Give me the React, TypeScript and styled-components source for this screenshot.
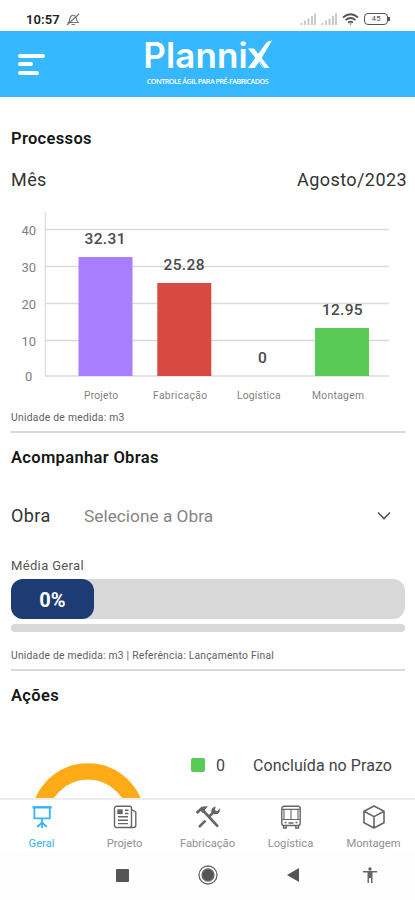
import React from "react";
import styled, { createGlobalStyle } from "styled-components";

const Global = createGlobalStyle`
  * { box-sizing: border-box; }
  html, body { margin: 0; padding: 0; background: #fff; }
  body { font-family: Roboto, "Liberation Sans", sans-serif; overflow: hidden; }
`;

const Screen = styled.div`
  width: 415px;
  height: 900px;
  display: flex;
  flex-direction: column;
  background: #fff;
  overflow: hidden;
`;

const StatusBar = styled.div`
  height: 31px;
  flex: none;
  display: flex;
  align-items: center;
  padding: 7px 27px 0 26px;
`;

const Clock = styled.span`
  font-size: 13px;
  line-height: 15px;
  font-weight: 600;
  letter-spacing: 0.1px;
  color: #222;
  width: 40px;
  white-space: nowrap;
`;

const StatusIcons = styled.div`
  margin-left: auto;
  display: flex;
  align-items: center;
  gap: 5px;
`;

const Battery = styled.div`
  position: relative;
  width: 24px;
  height: 12px;
  border: 1.5px solid #555;
  border-radius: 4px;
  font-size: 8px;
  line-height: 9px;
  text-align: center;
  color: #555;
  &::after {
    content: "";
    position: absolute;
    right: -3px;
    top: 2.5px;
    width: 2px;
    height: 4px;
    background: #555;
  }
`;

const Header = styled.header`
  height: 66px;
  flex: none;
  display: grid;
  grid-template-columns: 18px 1fr 18px;
  justify-items: center;
  background: #35b8ff;
`;

const Menu = styled.div`
  justify-self: start;
  display: flex;
  flex-direction: column;
  gap: 4.5px;
  padding-top: 22.5px;
  margin-left: 18px;
`;

const MenuLine = styled.span<{ $w: number }>`
  width: ${(p) => p.$w}px;
  height: 4px;
  border-radius: 2px;
  background: #fff;
`;

const Brand = styled.div`
  display: flex;
  flex-direction: column;
  align-items: center;
  color: #fff;
  padding-top: 5px;
`;

const BrandName = styled.div`
  display: flex;
  height: 38px;
  font-family: Inter, sans-serif;
  font-size: 35px;
  line-height: 39px;
  font-weight: 600;
  letter-spacing: 0.1px;
`;

const Slogan = styled.div`
  font-family: "Open Sans", sans-serif;
  font-size: 7.2px;
  line-height: 9px;
  font-weight: 600;
  letter-spacing: -0.5px;
  margin-top: 3px;
  white-space: nowrap;
`;

const Content = styled.main`
  flex: 1;
  min-height: 0;
  overflow: hidden;
  padding: 0 9px 0 11px;
`;

const Title = styled.h2<{ $top: number }>`
  margin: ${(p) => p.$top}px 0 0;
  font-size: 16.5px;
  line-height: 20px;
  font-weight: 600;
  letter-spacing: 0.33px;
  color: #161616;
`;

const Row = styled.div<{ $top: number }>`
  display: flex;
  align-items: center;
  height: 24px;
  margin-top: ${(p) => p.$top}px;
`;

const Label = styled.span<{ $muted?: boolean }>`
  font-size: ${(p) => (p.$muted ? 17.3 : 18)}px;
  line-height: 24px;
  letter-spacing: ${(p) => (p.$muted ? 0 : 0.42)}px;
  color: ${(p) => (p.$muted ? "#858585" : "#333")};
  white-space: nowrap;
`;

const Period = styled(Label)`
  margin-left: auto;
  margin-right: -1px;
`;

const ObraLabel = styled(Label)`
  width: 73px;
`;

const Chevron = styled.svg`
  margin-left: auto;
  margin-right: 15px;
`;

const Chart = styled.svg`
  display: block;
  margin: 13px 0 5px -11px;
`;

const Note = styled.div<{ $spacing: number }>`
  font-size: 10.3px;
  line-height: 14px;
  letter-spacing: ${(p) => p.$spacing}px;
  color: #5e5e5e;
  white-space: nowrap;
`;

const Rule = styled.hr<{ $top: number }>`
  margin: ${(p) => p.$top}px 0 0;
  border: 0;
  height: 2px;
  width: 394px;
  background: #d9d9d9;
`;

const Caption = styled.div`
  margin-top: 29px;
  font-size: 13px;
  line-height: 18px;
  letter-spacing: 0.35px;
  color: #555;
`;

const Track = styled.div`
  width: 394px;
  height: 40px;
  margin-top: 4px;
  border-radius: 12px;
  background: #d8d8d8;
`;

const Fill = styled.div`
  width: 83px;
  height: 100%;
  border-radius: 12px;
  background: #1c3c73;
  color: #fff;
  font-size: 20px;
  line-height: 42px;
  font-weight: 700;
  text-align: center;
`;

const ThinTrack = styled.div`
  width: 394px;
  height: 8px;
  margin: 5px 0 17px;
  border-radius: 4px;
  background: #d8d8d8;
`;

const Actions = styled.div`
  display: flex;
  margin-top: 57px;
`;

const Gauge = styled.svg`
  flex: none;
  margin-left: 20px;
`;

const Legend = styled.div`
  display: flex;
  align-items: center;
  height: 24px;
  margin: -10px 0 0 46px;
  font-size: 16px;
  color: #444;
  letter-spacing: 0.06px;
  white-space: nowrap;
`;

const Swatch = styled.span`
  width: 14px;
  height: 14px;
  border-radius: 2px;
  background: #57ca57;
`;

const Count = styled.span`
  width: 37px;
  margin-left: 11px;
`;

const Tabs = styled.nav`
  flex: none;
  height: 52px;
  display: grid;
  grid-template-columns: repeat(5, 83px);
  border-top: 2px solid #eee;
`;

const Tab = styled.div<{ $active?: boolean }>`
  display: flex;
  flex-direction: column;
  align-items: center;
  padding-top: 5px;
  color: ${(p) => (p.$active ? "#35b4f4" : "#666")};
`;

const TabText = styled.span<{ $active?: boolean }>`
  margin-top: 8px;
  font-size: 11.2px;
  line-height: 14px;
  color: ${(p) => (p.$active ? "#35b4f4" : "#909090")};
`;

const SystemNav = styled.div`
  flex: none;
  height: 50px;
  display: grid;
  grid-template-columns: 81px 82px 89px 82px 71px;
  justify-items: center;
  align-items: center;
  background: #fefefe;
`;

const bars = [
  { name: "Projeto", value: "32.31", x: 78.5, y: 257, w: 54, color: "#a97fff", lx: 84, lw: 34, vx: 84.5, vw: 41 },
  { name: "Fabricação", value: "25.28", x: 157.3, y: 283, w: 54, color: "#d64a43", lx: 153, lw: 54, vx: 163.5, vw: 41 },
  { name: "Logística", value: "0", x: 236, y: 376, w: 54, color: "#999", lx: 237, lw: 43.5, vx: 258, vw: 9 },
  { name: "Montagem", value: "12.95", x: 315, y: 328, w: 54, color: "#5aca57", lx: 312, lw: 52, vx: 322, vw: 40.5 },
];
const ticks = [
  { v: "40", y: 229.5 },
  { v: "30", y: 266.5 },
  { v: "20", y: 303.5 },
  { v: "10", y: 340.5 },
  { v: "0", y: 376 },
];

const ProcessChart = () => (
  <Chart width="415" height="201" viewBox="0 205 415 201">
    <path d="M45.3 212V376" stroke="#dcdcdc" strokeWidth="1.2" />
    {ticks.map((t) => (
      <g key={t.v}>
        <path d={`M45 ${t.y}H389`} stroke="#dadada" strokeWidth="1.3" />
        <text x={t.v === "0" ? 25 : 21.5} y={t.y + 5} fontSize="13" fill="#808080" textLength={t.v === "0" ? 7.5 : 14.5}>{t.v}</text>
      </g>
    ))}
    {bars.map((b) => (
      <g key={b.name}>
        <rect x={b.x} y={b.y} width={b.w} height={376 - b.y} fill={b.color} />
        <text x={b.vx} y={b.y - (b.value === "0" ? 13 : 12.7)} fontSize="15.5" fontWeight="500" fill="#4a4a4a" textLength={b.vw}>{b.value}</text>
        <text x={b.lx} y="399" fontSize="10.3" fill="#828282" textLength={b.lw}>{b.name}</text>
      </g>
    ))}
  </Chart>
);

const icon = { width: 24, height: 24, viewBox: "0 0 24 24", fill: "none", stroke: "currentColor", strokeWidth: 1.4 } as const;

const BoardIcon = () => (
  <svg {...icon}>
    <path d="M2.5 2.3H21.7" strokeWidth="2.4" />
    <path d="M4.4 3V13.4H19.8V3M12 13.5V23M12 17.3L7.3 22M12 17.3L16.8 22" strokeWidth="1.8" />
  </svg>
);
const NewsIcon = () => (
  <svg {...icon}>
    <rect x="1.5" y="1.3" width="17" height="21.2" rx="2" />
    <path d="M18.5 4.5L22.8 6.8V20.5Q22.8 22.5 20.5 22.5H17" />
    <rect x="5" y="5" width="4" height="3.5" fill="currentColor" />
    <path d="M12 5.2H15.5M12 8.5H15.5M5 11.8H15M5 15.2H15M5 18.6H15" />
  </svg>
);
const ToolsIcon = () => (
  <svg width="26" height="24" viewBox="0 0 26 24" fill="none" stroke="currentColor">
    <path d="M.6 7L6.2 2Q9.5 .7 13 1.6L9.8 4.4L10.2 6.6L7.8 8L5.8 6L2.6 9Z" fill="currentColor" stroke="none" />
    <path d="M8 5.5L23 21.7" strokeWidth="2.6" />
    <path d="M4 22L10.5 15.6M14.4 11.3L18 7.8" strokeWidth="2.6" />
    <path d="M20.8 1.5L19.8 4.9L22 6.2L24.7 3.2Q26 9.5 19.2 9.2L16.3 7.5Q15.6 2.4 20.8 1.5Z" fill="currentColor" stroke="none" />
  </svg>
);
const BusIcon = () => (
  <svg {...icon}>
    <rect x="2.8" y="1.3" width="18.4" height="19.2" rx="2" />
    <path d="M3 4.4H21M3 14.5H21M12 4.5V14.5M5 4.5V14M19 4.5V14" strokeWidth="1.1" />
    <path d="M9.5 18H14.5M5.5 17.5H7.5M16.5 17.5H18.5M4.5 20.5V23H7.2V20.5M16.8 20.5V23H19.5V20.5" />
  </svg>
);
const BoxIcon = () => (
  <svg {...icon}>
    <path d="M12 1L22 6.3V17.7L12 23L2 17.7V6.3ZM2 6.3L12 11.6L22 6.3M12 11.6V23" strokeLinejoin="round" strokeWidth="1.6" />
  </svg>
);

const tabs = [
  { name: "Geral", Icon: BoardIcon },
  { name: "Projeto", Icon: NewsIcon },
  { name: "Fabricação", Icon: ToolsIcon },
  { name: "Logística", Icon: BusIcon },
  { name: "Montagem", Icon: BoxIcon },
];

const Signal = () => (
  <svg width="16" height="12" viewBox="0 0 16 12" stroke="#c4c4c4" strokeWidth="1.8">
    <path d="M1.5 12V10M5 12V7.5M8.5 12V5.5M12 12V3M15 12V.5" />
  </svg>
);

export default function App() {
  return (
    <>
      <Global />
      <Screen>
        <StatusBar>
          <Clock>10:57</Clock>
          <svg width="14" height="13" viewBox="0 0 14 13" fill="none" stroke="#777" strokeWidth="1.2">
            <path d="M2.5 9.5C4.5 8 2.5 3.5 6.5 2.3C11.5 1.6 9.5 7 12 9.5ZM5.5 11.5H9M1 12L13 1" />
          </svg>
          <StatusIcons>
            <Signal />
            <Signal />
            <svg width="17" height="13" viewBox="0 0 17 13" fill="none" stroke="#555" strokeWidth="1.7">
              <path d="M1 4.5Q8.5 -2 16 4.5M3.5 7.2Q8.5 2.8 13.5 7.2M6 9.7Q8.5 7.6 11 9.7" />
              <path d="M7.2 10.5L8.5 12L9.8 10.5" fill="#555" stroke="none" />
            </svg>
            <Battery>45</Battery>
          </StatusIcons>
        </StatusBar>
        <Header>
          <Menu>
            <MenuLine $w={27} />
            <MenuLine $w={15} />
            <MenuLine $w={21} />
          </Menu>
          <Brand>
            <BrandName>
              <span>Planni</span>
              <svg width="24" height="34" viewBox="0 0 24 34">
                <path d="M0 12.5H6L21.5 32H15.2Z" fill="#fff" />
                <path d="M0 32L7.6 21.5L18.5 6.5Q20 4.6 24 4.4L12.2 24.5L6.8 32Z" fill="#fff" />
                <path d="M7.5 32L11.8 26L16 32" fill="none" stroke="#35b8ff" strokeWidth="0.8" />
              </svg>
            </BrandName>
            <Slogan>CONTROLE ÁGIL PARA PRÉ-FABRICADOS</Slogan>
          </Brand>
        </Header>
        <Content>
          <Title $top={32}>Processos</Title>
          <Row $top={19}>
            <Label>Mês</Label>
            <Period>Agosto/2023</Period>
          </Row>
          <ProcessChart />
          <Note $spacing={0.27}>Unidade de medida: m3</Note>
          <Rule $top={6} />
          <Title $top={15}>Acompanhar Obras</Title>
          <Row $top={36}>
            <ObraLabel>Obra</ObraLabel>
            <Label $muted>Selecione a Obra</Label>
            <Chevron width="14" height="10" viewBox="0 0 14 10" fill="none" stroke="#555" strokeWidth="1.6">
              <path d="M1 1.5L7 7.5L13 1.5" />
            </Chevron>
          </Row>
          <Caption>Média Geral</Caption>
          <Track>
            <Fill>0%</Fill>
          </Track>
          <ThinTrack />
          <Note $spacing={0.23}>Unidade de medida: m3 | Referência: Lançamento Final</Note>
          <Rule $top={6} />
          <Title $top={15}>Ações</Title>
          <Actions>
            <Gauge width="114" height="114" viewBox="0 0 114 114">
              <circle cx="57" cy="57" r="48.6" fill="none" stroke="#ffab18" strokeWidth="16.4" />
            </Gauge>
            <Legend>
              <Swatch />
              <Count>0</Count>
              <span>Concluída no Prazo</span>
            </Legend>
          </Actions>
        </Content>
        <Tabs>
          {tabs.map(({ name, Icon }, i) => (
            <Tab key={name} $active={i === 0}>
              <Icon />
              <TabText $active={i === 0}>{name}</TabText>
            </Tab>
          ))}
        </Tabs>
        <SystemNav>
          <span />
          <svg width="13" height="13"><rect width="13" height="13" rx="1" fill="#555" /></svg>
          <svg width="20" height="20" viewBox="0 0 20 20" fill="none" stroke="#666" strokeWidth="1.3">
            <circle cx="10" cy="10" r="9" />
            <circle cx="10" cy="10" r="6" fill="#555" />
          </svg>
          <svg width="12" height="14"><path d="M0 7L12 0V14Z" fill="#555" /></svg>
          <svg width="14" height="16" viewBox="0 0 14 16" fill="#666">
            <circle cx="7" cy="2" r="1.7" />
            <path d="M0 4H14V5.6H9.5V16H8V11H6V16H4.5V5.6H0Z" />
          </svg>
        </SystemNav>
      </Screen>
    </>
  );
}
